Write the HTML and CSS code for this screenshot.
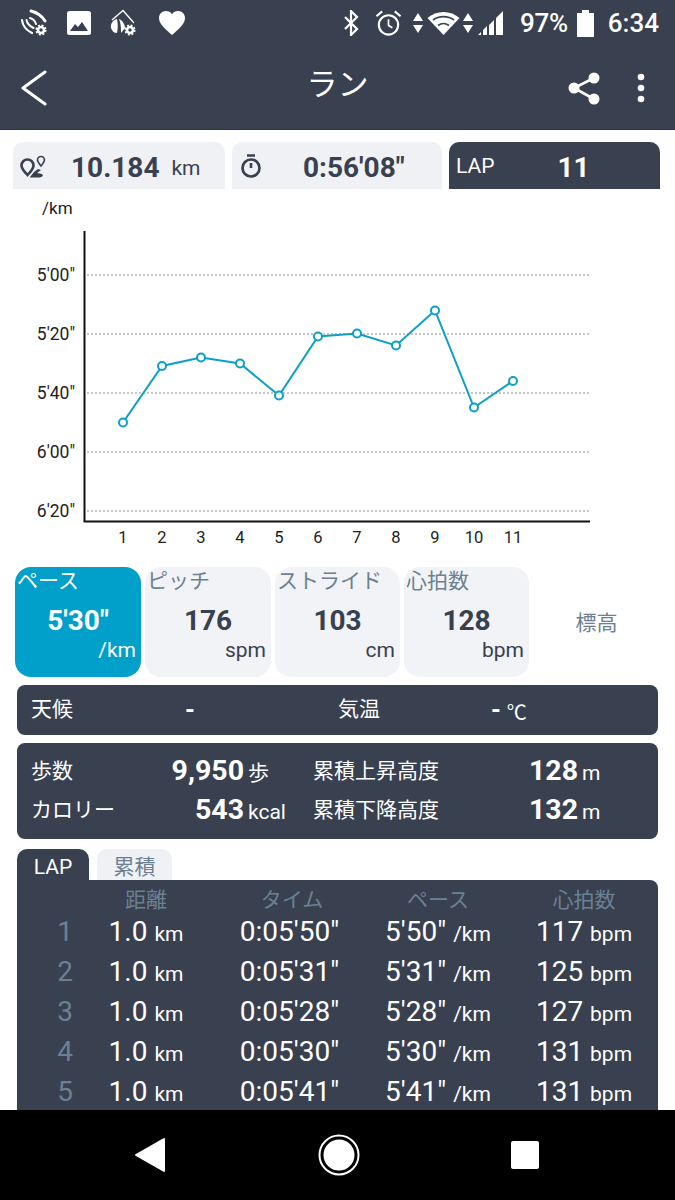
FILE: index.html
```html
<!DOCTYPE html>
<html lang="ja">
<head>
<meta charset="utf-8">
<title>ラン</title>
<link rel="stylesheet" href="styles.css">
</head>
<body>
<div class="phone">
  <header class="head">
    <div class="status">
      <div class="status-left">
        <svg class="ic" width="28" height="28" viewBox="0 0 28 28"><g fill="none" stroke="#fff" stroke-linecap="round"><path stroke-width="3" d="M11 2c6 1.500 11 5 14 10"/><path stroke-width="2.200" d="M2 11c.5 5 4 10 10 13"/><path stroke-width="2" d="M6.500 11c.5 3 3 6 7 8"/><path stroke-width="2" d="M10 9c2 .5 5 3 6 6"/></g><circle cx="21" cy="21" r="3" fill="none" stroke="#fff" stroke-width="2.600"/><circle cx="21" cy="21" r="4.800" fill="none" stroke="#fff" stroke-width="1.500" stroke-dasharray="2 1.770"/></svg>
        <svg class="ic" width="26" height="26" viewBox="0 0 26 26"><rect x="1" y="1" width="24" height="24" rx="2.500" fill="#fff"/><path d="M4 21l5-7 3 3 4-5 6 9z" fill="#39404f"/></svg>
        <svg class="ic" width="30" height="28" viewBox="0 0 30 28"><path d="M2 11L13 1.500 24 14" fill="none" stroke="#fff" stroke-width="1.400"/><path d="M7 10c-4 1-7 5-6 9 1 3 3 5 6 5 1-5 1-9 0-14z" fill="#fff"/><path d="M9 10c3 1 6 5 6 9l-4 5c0-5 0-9-2-14z" fill="#fff"/><circle cx="20" cy="21" r="3" fill="none" stroke="#fff" stroke-width="2.600"/><circle cx="20" cy="21" r="4.800" fill="none" stroke="#fff" stroke-width="1.500" stroke-dasharray="2 1.770"/></svg>
        <svg class="ic" width="28" height="26" viewBox="0 0 28 26"><path d="M14 25C5 17 1 13 1 8c0-4 3-7 7-7 2.500 0 4.700 1.200 6 3.200C15.300 2.200 17.500 1 20 1c4 0 7 3 7 7 0 5-4 9-13 17z" fill="#fff"/></svg>
      </div>
      <div class="status-right">
        <svg width="16" height="26" viewBox="0 0 16 26"><path d="M2 7l12 12-6 6V1l6 6L2 19" fill="none" stroke="#fff" stroke-width="2.200"/></svg>
        <svg width="27" height="28" viewBox="0 0 28 28" class="alarm"><circle cx="14" cy="16" r="10" fill="none" stroke="#fff" stroke-width="2.200"/><path d="M14 10v6.500l4 2.500" fill="none" stroke="#fff" stroke-width="1.800"/><path d="M1.500 7l6-5M26.500 7l-6-5" stroke="#fff" stroke-width="2.200"/></svg>
        <svg width="10" height="24" viewBox="0 0 10 24" class="arrows"><path d="M5 2l5 8H0zM5 22l5-8H0z" fill="#fff"/></svg>
        <svg width="33" height="26" viewBox="0 0 32 26" class="wifi"><path d="M16 25L0 8c9-8 23-8 32 0z" fill="#fff"/><path d="M5.500 10c6-4.500 15-4.500 21 0M10.500 15.500c3.500-2.500 7.500-2.500 11 0" fill="none" stroke="#39404f" stroke-width="1.600"/></svg>
        <svg width="10" height="24" viewBox="0 0 10 24" class="arrows2"><path d="M5 2l5 8H0zM5 22l5-8H0z" fill="#fff"/></svg>
        <svg width="26" height="26" viewBox="0 0 26 26" class="signal"><path d="M0 25h3v-3zM5 25h4v-9l-4 4zM11 25h5V10l-5 5zM18 25h7V1l-7 7z" fill="#fff"/></svg>
        <span class="pct">97%</span>
        <svg width="19" height="28" viewBox="0 0 19 28" class="batt"><path d="M6 1h7v3h5v24H1V4h5z" fill="#fff"/></svg>
        <span class="clock">6:34</span>
      </div>
    </div>
    <div class="appbar">
      <svg width="28" height="36" viewBox="0 0 28 36"><path d="M25 2L3 18l22 16" fill="none" stroke="#fff" stroke-width="3" stroke-linecap="round" stroke-linejoin="round"/></svg>
      <h1 class="title">ラン</h1>
      <div class="actions">
        <svg width="32" height="36" viewBox="0 0 32 36"><path d="M26 8L6 18l20 11" fill="none" stroke="#fff" stroke-width="2.600"/><circle cx="26" cy="8" r="5.500" fill="#fff"/><circle cx="6" cy="18" r="5.500" fill="#fff"/><circle cx="26" cy="29" r="5.500" fill="#fff"/></svg>
        <svg width="8" height="30" viewBox="0 0 8 30"><circle cx="4" cy="4" r="3.300" fill="#fff"/><circle cx="4" cy="15" r="3.300" fill="#fff"/><circle cx="4" cy="26" r="3.300" fill="#fff"/></svg>
      </div>
    </div>
  </header>

  <main class="main">
    <section class="summary">
      <div class="sum sum-dist">
        <svg width="26" height="26" viewBox="0 0 26 26"><path d="M7.500 22c-3.500-4-6-6-6-9.500a6 6 0 0 1 12 0c0 3.500-2.500 5.500-6 9.500z" fill="none" stroke="#39404f" stroke-width="2.600"/><path d="M21 13c-2-2.500-3.500-4-3.500-6a3.500 3.500 0 0 1 7 0c0 2-1.500 3.500-3.500 6z" fill="none" stroke="#39404f" stroke-width="1.700"/><path d="M10 24l4-5 4-3 3 1-4 3 5 1 1 2-3 1.500H10z" fill="#39404f"/></svg>
        <b class="sum-val">10.184</b><span class="sum-unit">km</span>
      </div>
      <div class="sum sum-time">
        <svg width="22" height="26" viewBox="0 0 22 26"><circle cx="11" cy="15" r="8.500" fill="none" stroke="#39404f" stroke-width="2.700"/><path d="M7 2.500h8M11 10v5" stroke="#39404f" stroke-width="2.600"/></svg>
        <b class="sum-val">0:56'08"</b>
      </div>
      <div class="sum sum-lap">
        <span class="lap-label">LAP</span><b class="lap-val">11</b>
      </div>
    </section>

    <section class="chart">
      <svg width="675" height="378" viewBox="0 189 675 378">
        <g class="grid">
          <line x1="87" x2="590" y1="275" y2="275"/>
          <line x1="87" x2="590" y1="334" y2="334"/>
          <line x1="87" x2="590" y1="393" y2="393"/>
          <line x1="87" x2="590" y1="452" y2="452"/>
          <line x1="87" x2="590" y1="511" y2="511"/>
        </g>
        <path class="axis" d="M84.500 231v290.500H590"/>
        <text class="unit-t" x="42" y="214">/km</text>
        <g class="ylab">
          <text x="75" y="281">5'00"</text>
          <text x="75" y="340">5'20"</text>
          <text x="75" y="399">5'40"</text>
          <text x="75" y="458">6'00"</text>
          <text x="75" y="517">6'20"</text>
        </g>
        <g class="xlab">
          <text x="123" y="543">1</text><text x="162" y="543">2</text><text x="201" y="543">3</text><text x="240" y="543">4</text><text x="279" y="543">5</text><text x="318" y="543">6</text><text x="357" y="543">7</text><text x="396" y="543">8</text><text x="435" y="543">9</text><text x="474" y="543">10</text><text x="513" y="543">11</text>
        </g>
        <polyline class="line" points="123,422.500 162,366 201,357.500 240,363.500 279,395.500 318,336.500 357,333.500 396,345.500 435,310.500 474,407.500 513,381"/>
        <g class="dots">
          <circle cx="123" cy="422.500" r="4"/><circle cx="162" cy="366" r="4"/><circle cx="201" cy="357.500" r="4"/><circle cx="240" cy="363.500" r="4"/><circle cx="279" cy="395.500" r="4"/><circle cx="318" cy="336.500" r="4"/><circle cx="357" cy="333.500" r="4"/><circle cx="396" cy="345.500" r="4"/><circle cx="435" cy="310.500" r="4"/><circle cx="474" cy="407.500" r="4"/><circle cx="513" cy="381" r="4"/>
        </g>
      </svg>
    </section>

    <section class="metrics">
      <div class="metric active w126"><div class="m-label">ペース</div><div class="m-val">5'30"</div><div class="m-unit">/km</div></div>
      <div class="metric w126"><div class="m-label">ピッチ</div><div class="m-val">176</div><div class="m-unit">spm</div></div>
      <div class="metric w125"><div class="m-label">ストライド</div><div class="m-val">103</div><div class="m-unit">cm</div></div>
      <div class="metric w125"><div class="m-label">心拍数</div><div class="m-val">128</div><div class="m-unit">bpm</div></div>
      <div class="metric-plain">標高</div>
    </section>

    <section class="weather">
      <span class="w-label">天候</span><b class="w-dash">-</b>
      <span class="w-label w-temp">気温</span><b class="w-dash2">-</b><span class="w-c">℃</span>
    </section>

    <section class="stats">
      <div class="stat-row">
        <span class="st-label">歩数</span>
        <span class="st-val st-a"><b>9,950</b> <small>歩</small></span>
        <span class="st-label st-b">累積上昇高度</span>
        <span class="st-val st-c"><b>128</b> <small>m</small></span>
      </div>
      <div class="stat-row">
        <span class="st-label">カロリー</span>
        <span class="st-val st-a"><b>543</b> <small>kcal</small></span>
        <span class="st-label st-b">累積下降高度</span>
        <span class="st-val st-c"><b>132</b> <small>m</small></span>
      </div>
    </section>

    <nav class="tabs">
      <span class="tab on">LAP</span>
      <span class="tab off">累積</span>
    </nav>
    <section class="laps">
      <div class="lap-row lap-head"><span></span><span>距離</span><span>タイム</span><span>ペース</span><span>心拍数</span></div>
      <div class="lap-row"><span class="n">1</span><span>1.0 <small>km</small></span><span class="t">0:05'50"</span><span>5'50" <small>/km</small></span><span>117 <small>bpm</small></span></div>
      <div class="lap-row"><span class="n">2</span><span>1.0 <small>km</small></span><span class="t">0:05'31"</span><span>5'31" <small>/km</small></span><span>125 <small>bpm</small></span></div>
      <div class="lap-row"><span class="n">3</span><span>1.0 <small>km</small></span><span class="t">0:05'28"</span><span>5'28" <small>/km</small></span><span>127 <small>bpm</small></span></div>
      <div class="lap-row"><span class="n">4</span><span>1.0 <small>km</small></span><span class="t">0:05'30"</span><span>5'30" <small>/km</small></span><span>131 <small>bpm</small></span></div>
      <div class="lap-row"><span class="n">5</span><span>1.0 <small>km</small></span><span class="t">0:05'41"</span><span>5'41" <small>/km</small></span><span>131 <small>bpm</small></span></div>
    </section>
  </main>

  <footer class="navbar">
    <svg width="32" height="36" viewBox="0 0 32 36"><path d="M30 2v32L2 18z" fill="#fff" stroke="#fff" stroke-width="2" stroke-linejoin="round"/></svg>
    <svg width="42" height="42" viewBox="0 0 42 42"><circle cx="21" cy="21" r="19.500" fill="none" stroke="#fff" stroke-width="2"/><circle cx="21" cy="21" r="15.500" fill="#fff"/></svg>
    <svg width="28" height="28" viewBox="0 0 28 28"><rect width="28" height="28" rx="2" fill="#fff"/></svg>
  </footer>
</div>
</body>
</html>
```
FILE: styles.css
```css
* { box-sizing: border-box; }
html, body { margin: 0; padding: 0; background: #fff; }
body { font-family: Roboto, "Noto Sans CJK JP", sans-serif; color: #39404f; }
.phone { width: 675px; height: 1200px; display: flex; flex-direction: column; overflow: hidden; }

.head { background: #39404f; height: 130px; border-bottom: 1px solid #2c3240; flex: none; color: #fff; }
.status { height: 44px; display: flex; justify-content: space-between; align-items: center; padding: 2px 16px 0 20px; }
.status-left { display: flex; align-items: center; gap: 18px; }
.status-right { display: flex; align-items: center; }
.alarm { margin-left: 16px; }
.arrows { margin-left: 11px; }
.wifi { margin-left: 4px; }
.arrows2 { margin-left: 3px; }
.signal { margin-left: 5px; }
.pct { font-size: 26px; margin-left: 16px; font-weight: 500; letter-spacing: -0.3px; }
.batt { margin-left: 8px; }
.clock { font-size: 26px; margin-left: 13px; font-weight: 500; }

.appbar { height: 85px; display: flex; align-items: center; padding: 0 30px 0 20px; position: relative; }
.appbar > svg { margin-top: 3px; }
.title { position: absolute; left: 0; right: 0; margin: 0; text-align: center; font-size: 31px; font-weight: 400; line-height: 40px; top: 21px; }
.actions { margin-left: auto; display: flex; align-items: center; gap: 37px; margin-top: 3px; }

.main { flex: 1; min-height: 0; overflow: hidden; }

.summary { display: flex; padding: 12px 15px 0 13px; gap: 7px; height: 59px; }
.sum { height: 47px; border-radius: 10px 10px 0 0; background: #f0f1f4; display: flex; align-items: center; position: relative; }
.sum-dist { width: 212px; padding-left: 7px; }
.sum-time { width: 210px; padding-left: 8px; }
.sum-lap { width: 211px; background: #39404f; color: #fff; padding-left: 7px; }
.sum-val { font-size: 28px; font-weight: 700; margin-top: 3px; }
.sum-dist .sum-val { margin-left: 25px; }
.sum-time .sum-val { margin-left: 41px; }
.sum-unit { font-size: 21px; margin-left: 12px; margin-top: 5px; }
.lap-label { font-size: 21px; }
.lap-val { font-size: 28px; font-weight: 700; margin-left: 63px; margin-top: 3px; }

.chart { height: 378px; }
.chart svg { display: block; }
.grid line { stroke: #c6c6c6; stroke-width: 2; stroke-dasharray: 2 2; }
.axis { fill: none; stroke: #111; stroke-width: 2; }
.unit-t { font-size: 17px; fill: #222; }
.ylab text { font-size: 17.500px; fill: #222; text-anchor: end; }
.xlab text { font-size: 16.500px; fill: #222; text-anchor: middle; }
.line { fill: none; stroke: #0ca0c8; stroke-width: 2; }
.dots circle { fill: #fff; stroke: #0ca0c8; stroke-width: 2; }

.metrics { display: flex; padding-left: 15px; gap: 4px; height: 110px; }
.metric { height: 110px; border-radius: 16px; background: #f2f3f6; position: relative; padding: 0 5px 0 2px; }
.w126 { width: 126px; }
.w125 { width: 125px; }
.metric.active { background: #00a0ca; color: #fff; }
.m-label { font-size: 21px; line-height: 28px; color: #6b8193; white-space: nowrap; }
.active .m-label { color: #fff; }
.m-val { font-size: 28px; font-weight: 700; line-height: 32px; text-align: center; margin-top: 10px; padding-left: 3px; }
.m-unit { font-size: 21px; line-height: 24px; text-align: right; margin-top: 1px; }
.metric-plain { width: 127px; text-align: center; font-size: 21px; line-height: 112px; color: #6b8193; }

.weather { margin: 8px 17px 0; height: 50px; background: #39404f; border-radius: 8px; color: #fff; display: flex; align-items: center; padding-left: 14px; font-size: 21px; }
.w-label { line-height: 48px; padding-bottom: 2px; }
.w-dash { margin-left: 112px; font-size: 25px; width: 9px; }
.w-temp { margin-left: 144px; }
.w-dash2 { margin-left: 111px; font-size: 25px; }
.w-c { margin-left: 6px; font-size: 20px; margin-top: 2px; }

.stats { margin: 8px 17px 0; height: 96px; background: #39404f; border-radius: 8px; color: #fff; padding: 8px 0 0 14px; }
.stat-row { display: flex; align-items: center; height: 39px; }
.st-label { font-size: 21px; width: 100px; white-space: nowrap; padding-bottom: 3px; }
.st-val b { font-size: 28.500px; font-weight: 700; }
.st-val small { font-size: 21px; font-weight: 400; }
.stat-row .st-a { text-align: right; width: 155px; white-space: nowrap; }
.stat-row .st-a small { display: inline-block; width: 38px; text-align: left; }
.stat-row .st-b { margin-left: 27px; width: 126px; }
.stat-row .st-c { margin-left: 90px; white-space: nowrap; }

.tabs { margin: 10px 0 0 17px; display: flex; gap: 8px; height: 31px; align-items: flex-end; }
.tab { height: 31px; border-radius: 10px 10px 0 0; font-size: 21px; line-height: 36px; text-align: center; overflow: hidden; }
.tab.on { width: 72px; background: #39404f; color: #fff; }
.tab.off { width: 75px; background: #f0f1f4; color: #6b8193; }

.laps { margin: 0 17px; background: #39404f; border-radius: 0 8px 0 0; color: #fff; height: 230px; padding-top: 3px; overflow: hidden; }
.lap-row { display: grid; grid-template-columns: 56px repeat(4, 146px); height: 40px; align-items: center; text-align: center; font-size: 28px; font-weight: 400; white-space: nowrap; }
.lap-row small { font-size: 21px; }
.lap-row .n { text-align: right; color: #6b8193; font-size: 28px; }
.lap-row .t { padding-right: 5px; }
.lap-row.lap-head { height: 28px; font-size: 21px; color: #6b8193; }

.navbar { height: 90px; background: #000; flex: none; display: flex; align-items: center; justify-content: space-between; padding: 0 136px 0 134px; }
```
